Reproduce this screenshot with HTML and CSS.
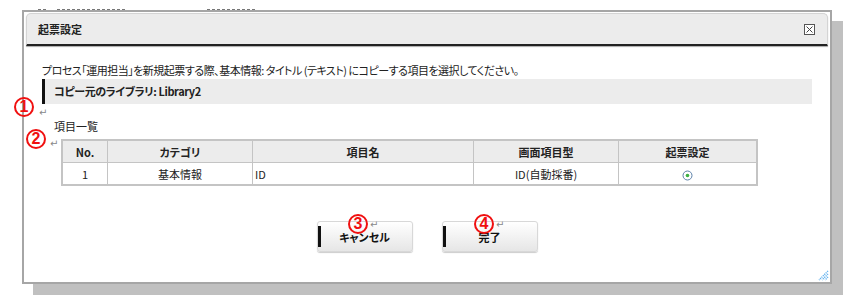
FILE: index.html
```html
<!DOCTYPE html>
<html lang="ja">
<head>
    <meta charset="UTF-8">
    <title>起票設定</title>
    <link rel="stylesheet" href="styles.css">
</head>
<body>
    <div class="backdrop">
        <span class="ghost g1"></span>
        <span class="ghost g2"></span>
        <span class="ghost g3"></span>
    </div>
    <div class="dialog">
        <div class="titlebar">
            <span class="title">起票設定</span>
            <svg class="close" width="11" height="11" viewBox="0 0 11 11">
                <rect x="0.5" y="0.5" width="10" height="10" fill="#fff" stroke="#555"/>
                <path d="M2.5 2.5 L8.5 8.5 M8.5 2.5 L2.5 8.5" stroke="#444" stroke-width="1"/>
            </svg>
        </div>
        <div class="content">
            <p class="desc">プロセス「運用担当」を新規起票する際、基本情報: タイトル (テキスト) にコピーする項目を選択してください。</p>
            <div class="library">コピー元のライブラリ: Library2</div>
            <div class="mark-line"><span class="ret">↵</span></div>
            <div class="list-title">項目一覧</div>
            <div class="table-row">
                <span class="ret ret-table">↵</span>
                <table class="items">
                    <tr>
                        <th class="c-no">No.</th>
                        <th class="c-cat">カテゴリ</th>
                        <th class="c-name">項目名</th>
                        <th class="c-type">画面項目型</th>
                        <th class="c-set">起票設定</th>
                    </tr>
                    <tr>
                        <td>1</td>
                        <td>基本情報</td>
                        <td class="left">ID</td>
                        <td>ID(自動採番)</td>
                        <td>
                            <svg width="11" height="11" viewBox="0 0 11 11">
                                <circle cx="5.5" cy="5.5" r="4.5" fill="#fff" stroke="#5a7fa8" stroke-width="1"/>
                                <circle cx="5.5" cy="5.5" r="1.8" fill="#3cb043"/>
                            </svg>
                        </td>
                    </tr>
                </table>
            </div>
            <div class="actions">
                <button class="btn">キャンセル</button>
                <button class="btn">完了</button>
            </div>
        </div>
        <svg class="grip" width="12" height="12" viewBox="0 0 12 12">
            <path d="M11 2 L2 11 M11 5 L5 11 M11 8 L8 11" stroke="#5fb0ee" stroke-width="1.4" stroke-dasharray="1.2 0.8"/>
        </svg>
    </div>

    <span class="num n1">1</span>
    <span class="num n2">2</span>
    <span class="num n3">3</span>
    <span class="ret n3-ret">↵</span>
    <span class="num n4">4</span>
    <span class="ret n4-ret">↵</span>
</body>
</html>
```

FILE: styles.css
```css
html, body {
    margin: 0;
    padding: 0;
    background: #fff;
}
body {
    font-family: "Noto Sans CJK JP", "DejaVu Sans", sans-serif;
    font-feature-settings: "palt";
    font-size: 11px;
    color: #222;
    width: 845px;
    height: 299px;
    overflow: hidden;
    position: relative;
}
.backdrop {
    height: 0;
}
.ghost {
    position: absolute;
    top: 9px;
    height: 1px;
    border-top: 1px dashed #777;
}
.g1 { left: 57px; width: 68px; }
.g2 { left: 38px; width: 8px; }
.g3 { left: 207px; width: 48px; }

.dialog {
    position: relative;
    margin: 10px 0 0 22px;
    width: 806px;
    height: 269px;
    border: 2px solid #a6a6a6;
    background: #fff;
    box-shadow: 11px 11px 0 #c0c0c0;
    padding: 1px 0 0;
}
.titlebar {
    display: flex;
    align-items: center;
    justify-content: space-between;
    margin: 0 2px;
    height: 30px;
    padding: 0 12px 0 11px;
    background: #ececec;
    border: 1px solid #d4d4d4;
    border-bottom: 2px solid #222;
    border-radius: 5px 5px 0 0;
    box-shadow: 0 1px 1px #aaa;
}
.title {
    font-weight: bold;
    font-size: 11px;
}
.close {
    display: block;
}
.content {
    padding: 0 18px;
}
.desc {
    margin: 16px 0 0;
    line-height: 17px;
    letter-spacing: -0.5px;
}
.library {
    height: 25px;
    line-height: 25px;
    background: #ececec;
    border-left: 3px solid #111;
    padding-left: 9px;
    font-weight: bold;
    letter-spacing: -0.4px;
}
.mark-line {
    height: 14px;
    line-height: 14px;
}
.ret {
    color: #888;
    font-size: 10px;
    font-family: "DejaVu Sans", sans-serif;
}
.mark-line .ret {
    margin-left: -3px;
}
.list-title {
    line-height: 16px;
    padding-left: 12px;
}
.table-row {
    display: flex;
    align-items: flex-start;
    margin-top: 5px;
}
.ret-table {
    margin-left: 8px;
    margin-top: -1px;
    width: 11px;
}
.items {
    border-collapse: collapse;
    width: 697px;
    border: 2px solid #c4c4c4;
}
.items th, .items td {
    border: 1px solid #c4c4c4;
    height: 21px;
    padding: 0 2px;
    text-align: center;
    font-size: 11px;
}
.items th {
    background: #ececec;
    font-weight: bold;
}
.items td.left {
    text-align: left;
}
.items td svg {
    display: inline-block;
    vertical-align: middle;
}
.c-no { width: 40px; }
.c-cat { width: 140px; }
.c-name { width: 216px; }
.c-type { width: 140px; }
.actions {
    display: flex;
    justify-content: center;
    gap: 29px;
    margin: 35px -18px 0;
}
.btn {
    position: relative;
    width: 96px;
    height: 31px;
    font-family: "Noto Sans CJK JP", sans-serif;
    font-feature-settings: "palt";
    font-size: 11px;
    font-weight: bold;
    color: #111;
    background: linear-gradient(#ffffff, #e6e6e6);
    border: 1px solid #d8d8d8;
    border-radius: 3px;
    box-shadow: 0 1px 1px #ccc;
    padding: 0;
}
.btn::before {
    content: "";
    position: absolute;
    left: 0;
    top: 4px;
    bottom: 4px;
    width: 3px;
    background: #111;
}
.grip {
    position: absolute;
    right: 1px;
    bottom: 1px;
}
.num {
    position: absolute;
    width: 16px;
    height: 16px;
    border: 2px solid #f01010;
    border-radius: 50%;
    color: #f01010;
    font-family: "Liberation Sans", sans-serif;
    font-weight: bold;
    font-size: 16px;
    line-height: 16px;
    text-align: center;
}
.n1 { left: 14px; top: 97px; }
.n2 { left: 26px; top: 129px; }
.n3 { left: 348px; top: 214px; }
.n4 { left: 474px; top: 214px; }
.n3-ret { position: absolute; left: 370px; top: 219px; }
.n4-ret { position: absolute; left: 496px; top: 219px; }
```
